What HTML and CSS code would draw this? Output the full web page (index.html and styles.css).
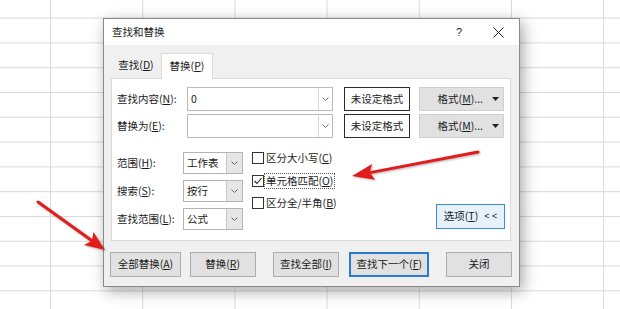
FILE: index.html
```html
<!DOCTYPE html>
<html lang="zh-CN">
<head>
<meta charset="utf-8">
<title>查找和替换</title>
<link rel="stylesheet" href="styles.css">
</head>
<body>
<div class="sheet">
  <div class="dialog">
    <div class="titlebar">
      <span class="title">查找和替换</span>
      <span class="help">?</span>
      <span class="close"><svg width="11" height="11" viewBox="0 0 11 11"><path d="M0.5 0.5 L10.5 10.5 M10.5 0.5 L0.5 10.5" stroke="#222" stroke-width="1" fill="none"/></svg></span>
    </div>
    <div class="body">
      <div class="tabs">
        <div class="tab">查找(<u>D</u>)</div>
        <div class="tab active">替换(<u>P</u>)</div>
      </div>
      <div class="panel">
        <div class="frow">
          <span class="flabel">查找内容(<u>N</u>):</span>
          <div class="combo"><span class="val">0</span><span class="drop"><svg width="7" height="4" viewBox="0 0 7 4"><polyline points="0.5,0.5 3.5,3.5 6.5,0.5" fill="none" stroke="#777" stroke-width="1"/></svg></span></div>
          <div class="fmtbox">未设定格式</div>
          <div class="fmtbtn"><span>格式(<u>M</u>)...</span><svg width="7" height="4" viewBox="0 0 7 4"><polygon points="0,0 7,0 3.5,4" fill="#222"/></svg></div>
        </div>
        <div class="frow">
          <span class="flabel">替换为(<u>E</u>):</span>
          <div class="combo"><span class="val"></span><span class="drop"><svg width="7" height="4" viewBox="0 0 7 4"><polyline points="0.5,0.5 3.5,3.5 6.5,0.5" fill="none" stroke="#777" stroke-width="1"/></svg></span></div>
          <div class="fmtbox">未设定格式</div>
          <div class="fmtbtn"><span>格式(<u>M</u>)...</span><svg width="7" height="4" viewBox="0 0 7 4"><polygon points="0,0 7,0 3.5,4" fill="#222"/></svg></div>
        </div>
        <div class="lower">
          <div class="opts">
            <div class="orow">
              <span class="olabel">范围(<u>H</u>):</span>
              <div class="select"><span class="val">工作表</span><span class="sdrop"><svg width="7" height="4" viewBox="0 0 7 4"><polyline points="0.5,0.5 3.5,3.5 6.5,0.5" fill="none" stroke="#666" stroke-width="1"/></svg></span></div>
            </div>
            <div class="orow">
              <span class="olabel">搜索(<u>S</u>):</span>
              <div class="select"><span class="val">按行</span><span class="sdrop"><svg width="7" height="4" viewBox="0 0 7 4"><polyline points="0.5,0.5 3.5,3.5 6.5,0.5" fill="none" stroke="#666" stroke-width="1"/></svg></span></div>
            </div>
            <div class="orow">
              <span class="olabel">查找范围(<u>L</u>):</span>
              <div class="select"><span class="val">公式</span><span class="sdrop"><svg width="7" height="4" viewBox="0 0 7 4"><polyline points="0.5,0.5 3.5,3.5 6.5,0.5" fill="none" stroke="#666" stroke-width="1"/></svg></span></div>
            </div>
          </div>
          <div class="checks">
            <div class="chk"><span class="box"></span><span class="clabel">区分大小写(<u>C</u>)</span></div>
            <div class="chk"><span class="box"><svg width="10" height="10" viewBox="0 0 10 10"><polyline points="1.5,5 4,7.5 8.5,2" fill="none" stroke="#222" stroke-width="1.1"/></svg></span><span class="clabel focus">单元格匹配(<u>O</u>)</span></div>
            <div class="chk"><span class="box"></span><span class="clabel">区分全/半角(<u>B</u>)</span></div>
          </div>
          <div class="optbtn"><span>选项(<u>T</u>)</span><span class="chev">&lt; &lt;</span></div>
        </div>
      </div>
      <div class="buttons">
        <div class="btn b1">全部替换(<u>A</u>)</div>
        <div class="btn b2">替换(<u>R</u>)</div>
        <div class="btn b3">查找全部(<u>I</u>)</div>
        <div class="btn b4 default">查找下一个(<u>F</u>)</div>
        <div class="btn b5">关闭</div>
      </div>
    </div>
  </div>
  <svg class="arrows" width="620" height="309" viewBox="0 0 620 309">
    <line x1="478" y1="152" x2="370" y2="172.6" stroke="#e31b1b" stroke-width="3" stroke-linecap="round"/>
    <polygon points="352,176 372.1,164 369.7,172.6 375.1,179.8" fill="#e31b1b"/>
    <line x1="38" y1="202" x2="92" y2="240.7" stroke="#e31b1b" stroke-width="3" stroke-linecap="round"/>
    <polygon points="105,250 84,244.9 92,240.7 93.4,231.9" fill="#e31b1b"/>
  </svg>
</div>
</body>
</html>
```

FILE: styles.css
```css
body {
  margin: 0;
  font-family: "Noto Sans CJK SC", "Noto Sans", "Liberation Sans", sans-serif;
  font-size: 10.5px;
  color: #1a1a1a;
}

u {
  text-decoration: underline;
  text-decoration-thickness: 1px;
  text-underline-offset: 1px;
}

.sheet {
  position: relative;
  width: 620px;
  height: 309px;
  box-sizing: border-box;
  padding: 18px 0 0 103px;
  overflow: hidden;
  background-color: #fff;
  background-image:
    linear-gradient(to right, #d9d9d9 1px, transparent 1px),
    linear-gradient(to bottom, #d9d9d9 1px, transparent 1px);
  background-size: 92.2px 24.8px;
  background-position: 50px 17.6px;
}

.dialog {
  width: 417px;
  height: 269px;
  box-sizing: border-box;
  border: 1px solid #8a8a8a;
  background: #f0f0f0;
  box-shadow: 3px 4px 14px rgba(0, 0, 0, 0.35);
  display: flex;
  flex-direction: column;
}

.titlebar {
  flex: none;
  height: 26px;
  background: #fff;
  display: flex;
  align-items: center;
  padding-left: 8px;
  line-height: 1;
}

.title {
  flex: 1;
  font-size: 10.5px;
}

.help {
  width: 20px;
  text-align: center;
  margin-right: 19px;
  font-size: 11px;
  font-family: "Liberation Sans", sans-serif;
}

.close {
  width: 20px;
  display: flex;
  justify-content: center;
  margin-right: 11px;
}

.body {
  flex: 1;
  display: flex;
  flex-direction: column;
  padding: 0 7px 0 7px;
}

.tabs {
  flex: none;
  height: 33px;
  display: flex;
  align-items: flex-end;
}

.tab {
  width: 50px;
  height: 25px;
  display: flex;
  align-items: center;
  justify-content: center;
  line-height: 1;
}

.tab.active {
  position: relative;
  width: 52px;
  height: 26px;
  margin-bottom: -1px;
  box-sizing: border-box;
  background: #fff;
  border: 1px solid #dadada;
  border-bottom: none;
  padding-bottom: 1px;
}

.panel {
  flex: none;
  width: 400px;
  height: 163px;
  box-sizing: border-box;
  border: 1px solid #dadada;
  background: #fff;
  padding: 8px 5px 0 5px;
  display: flex;
  flex-direction: column;
}

.frow {
  display: flex;
  align-items: center;
  height: 24px;
}

.frow + .frow {
  margin-top: 3px;
}

.flabel {
  width: 70px;
  line-height: 1;
}

.combo {
  width: 146px;
  height: 24px;
  box-sizing: border-box;
  border: 1px solid #b9b9b9;
  background: #fff;
  display: flex;
}

.val {
  flex: 1;
  padding-left: 3px;
  display: flex;
  align-items: center;
  line-height: 1;
}

.drop {
  width: 13px;
  border-left: 1px solid #d6d6d6;
  display: flex;
  align-items: center;
  justify-content: center;
}

.fmtbox {
  margin-left: 11px;
  width: 66px;
  height: 24px;
  box-sizing: border-box;
  border: 1px solid #2b2b2b;
  background: #fff;
  display: flex;
  align-items: center;
  justify-content: center;
  line-height: 1;
}

.fmtbtn {
  margin-left: 9px;
  width: 85px;
  height: 24px;
  box-sizing: border-box;
  border: 1px solid #cfcfcf;
  background: #e1e1e1;
  display: flex;
  align-items: center;
  justify-content: flex-end;
  gap: 9px;
  padding-right: 4px;
  line-height: 1;
}

.lower {
  margin-top: 14px;
  display: flex;
}

.opts {
  display: flex;
  flex-direction: column;
  gap: 6px;
}

.orow {
  display: flex;
  align-items: center;
  height: 22px;
}

.olabel {
  width: 66px;
  line-height: 1;
}

.select {
  width: 60px;
  height: 22px;
  box-sizing: border-box;
  border: 1px solid #b4b4b4;
  background: #fff;
  display: flex;
}

.sdrop {
  width: 15px;
  background: #e6e6e6;
  border-left: 1px solid #c8c8c8;
  display: flex;
  align-items: center;
  justify-content: center;
}

.checks {
  margin-left: 9px;
  margin-top: -5px;
  display: flex;
  flex-direction: column;
}

.chk {
  height: 22.5px;
  display: flex;
  align-items: center;
}

.box {
  width: 12px;
  height: 12px;
  box-sizing: border-box;
  border: 1px solid #333;
  background: #fff;
  display: flex;
  align-items: center;
  justify-content: center;
}

.clabel {
  border: 1px dotted transparent;
  padding: 2px 1px;
  line-height: 1;
}

.clabel.focus {
  border-color: #555;
}

.optbtn {
  margin-left: auto;
  align-self: flex-end;
  margin-bottom: 1px;
  width: 69px;
  height: 25px;
  box-sizing: border-box;
  border: 1px solid #3c8ad8;
  background: #e5f1fb;
  display: flex;
  align-items: center;
  justify-content: center;
  gap: 6px;
  line-height: 1;
}

.chev {
  font-size: 9px;
  font-family: "Liberation Sans", sans-serif;
}

.buttons {
  margin-top: 11px;
  margin-left: -1px;
  display: flex;
}

.btn {
  height: 25px;
  box-sizing: border-box;
  border: 1px solid #adadad;
  background: #e1e1e1;
  display: flex;
  align-items: center;
  justify-content: center;
  line-height: 1;
}

.b1 { width: 71px; }
.b2 { width: 66px; margin-left: 9px; }
.b3 { width: 67px; margin-left: 17px; }
.b4 { width: 80px; margin-left: 10px; }
.b5 { width: 66px; margin-left: 17px; }

.btn.default {
  border: 2px solid #2b7bd3;
}

.arrows {
  position: absolute;
  left: 0;
  top: 0;
  pointer-events: none;
  filter: drop-shadow(1px 1px 1px rgba(0, 0, 0, 0.3));
}
```
